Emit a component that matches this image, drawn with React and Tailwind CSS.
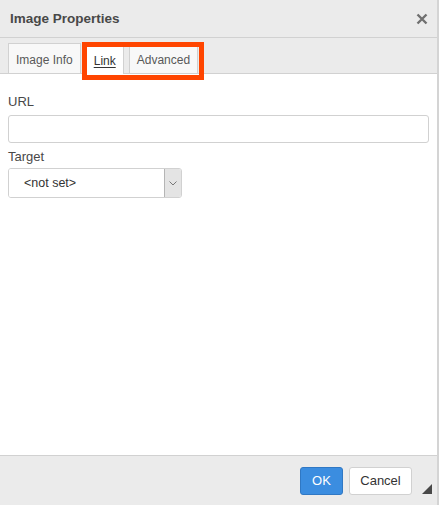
import React, { useState } from 'react';

const tabs = ['Image Info', 'Link', 'Advanced'];

const ImagePropertiesDialog = () => {
    const [activeTab, setActiveTab] = useState('Link');
    const [url, setUrl] = useState('');
    const [target, setTarget] = useState('notSet');

    return (
        <div
            className="w-[439px] h-[505px] bg-white flex flex-col border-r-2 border-[#d4d4d4] text-[13px] text-[#484848] relative overflow-hidden"
            style={{ fontFamily: '"Liberation Sans", Arial, sans-serif' }}
        >
            {/* Title bar */}
            <div className="h-[38px] shrink-0 bg-[#ebebeb] border-b border-[#d1d1d1] flex items-center justify-between pl-[10px] pr-[9px]">
                <span className="font-bold text-[13.5px] text-[#484848] mt-px">Image Properties</span>
                <svg width="12" height="12" viewBox="0 0 12 12">
                    <path d="M1.5 1.5 L10.5 10.5 M10.5 1.5 L1.5 10.5" stroke="#707070" strokeWidth="2.4" />
                </svg>
            </div>

            {/* Tab strip */}
            <div className="h-[36px] shrink-0 bg-[#ebebeb] border-b border-[#d1d1d1] flex items-end pl-[8px] gap-[5px]">
                {tabs.map((tab) => {
                    const active = tab === activeTab;
                    return (
                        <button
                            key={tab}
                            onClick={() => setActiveTab(tab)}
                            className={
                                active
                                    ? 'h-[30px] px-[7px] pt-[3px] bg-white border border-b-0 border-[#d1d1d1] -mb-px text-[12px] text-[#333] underline underline-offset-[2px]'
                                    : 'h-[30px] px-[7px] pt-[3px] bg-[#f8f8f8] border border-b-0 border-[#d1d1d1] text-[12px] text-[#595959]'
                            }
                        >
                            {tab}
                        </button>
                    );
                })}
            </div>

            {/* Link tab contents */}
            <div className="flex-1 px-[8px] pt-[21px]">
                <label className="block text-[13px] text-[#484848] leading-[14px]">URL</label>
                <input
                    value={url}
                    onChange={(e) => setUrl(e.target.value)}
                    className="mt-[6px] w-full h-[28px] border border-[#d1d1d1] rounded-[3px] px-2 outline-none"
                />
                <label className="block mt-[7px] text-[13px] text-[#484848] leading-[14px]">Target</label>
                <div className="mt-[4px] w-[174px] h-[30px] border border-[#d1d1d1] rounded-[3px] flex items-stretch overflow-hidden">
                    <select
                        value={target}
                        onChange={(e) => setTarget(e.target.value)}
                        className="flex-1 appearance-none bg-white pl-[15px] outline-none text-[#333] text-[12.5px]"
                    >
                        <option value="notSet">&lt;not set&gt;</option>
                        <option value="_blank">New Window (_blank)</option>
                        <option value="_top">Topmost Window (_top)</option>
                        <option value="_self">Same Window (_self)</option>
                        <option value="_parent">Parent Window (_parent)</option>
                    </select>
                    <div className="w-[17px] bg-[#e4e4e4] border-l border-[#b5b5b5] flex items-center justify-center">
                        <svg width="8" height="5" viewBox="0 0 8 5">
                            <path d="M0.5 0.5 L4 4 L7.5 0.5" fill="none" stroke="#777" strokeWidth="1" />
                        </svg>
                    </div>
                </div>
            </div>

            {/* Footer buttons */}
            <div className="h-[50px] shrink-0 bg-[#ebebeb] border-t border-[#d1d1d1] flex items-center justify-end gap-[6px] pr-[25px] relative">
                <button className="h-[28px] w-[43px] rounded-[3px] bg-[#3b8de0] border border-[#3078c4] text-white text-[13px]">
                    OK
                </button>
                <button className="h-[28px] w-[63px] rounded-[3px] bg-white border border-[#d1d1d1] text-[#333] text-[13px]">
                    Cancel
                </button>
                {/* Resize grip */}
                <svg width="10" height="10" viewBox="0 0 10 10" className="absolute right-[5px] bottom-[11px]">
                    <path d="M10 0 L10 10 L0 10 Z" fill="#484848" />
                </svg>
            </div>

            {/* Highlight around Link / Advanced tabs */}
            <div className="absolute left-[82px] top-[42px] w-[122px] h-[38px] border-[5px] border-[#ff4500] pointer-events-none" />
        </div>
    );
};

export default function App() {
    return <ImagePropertiesDialog />;
}
